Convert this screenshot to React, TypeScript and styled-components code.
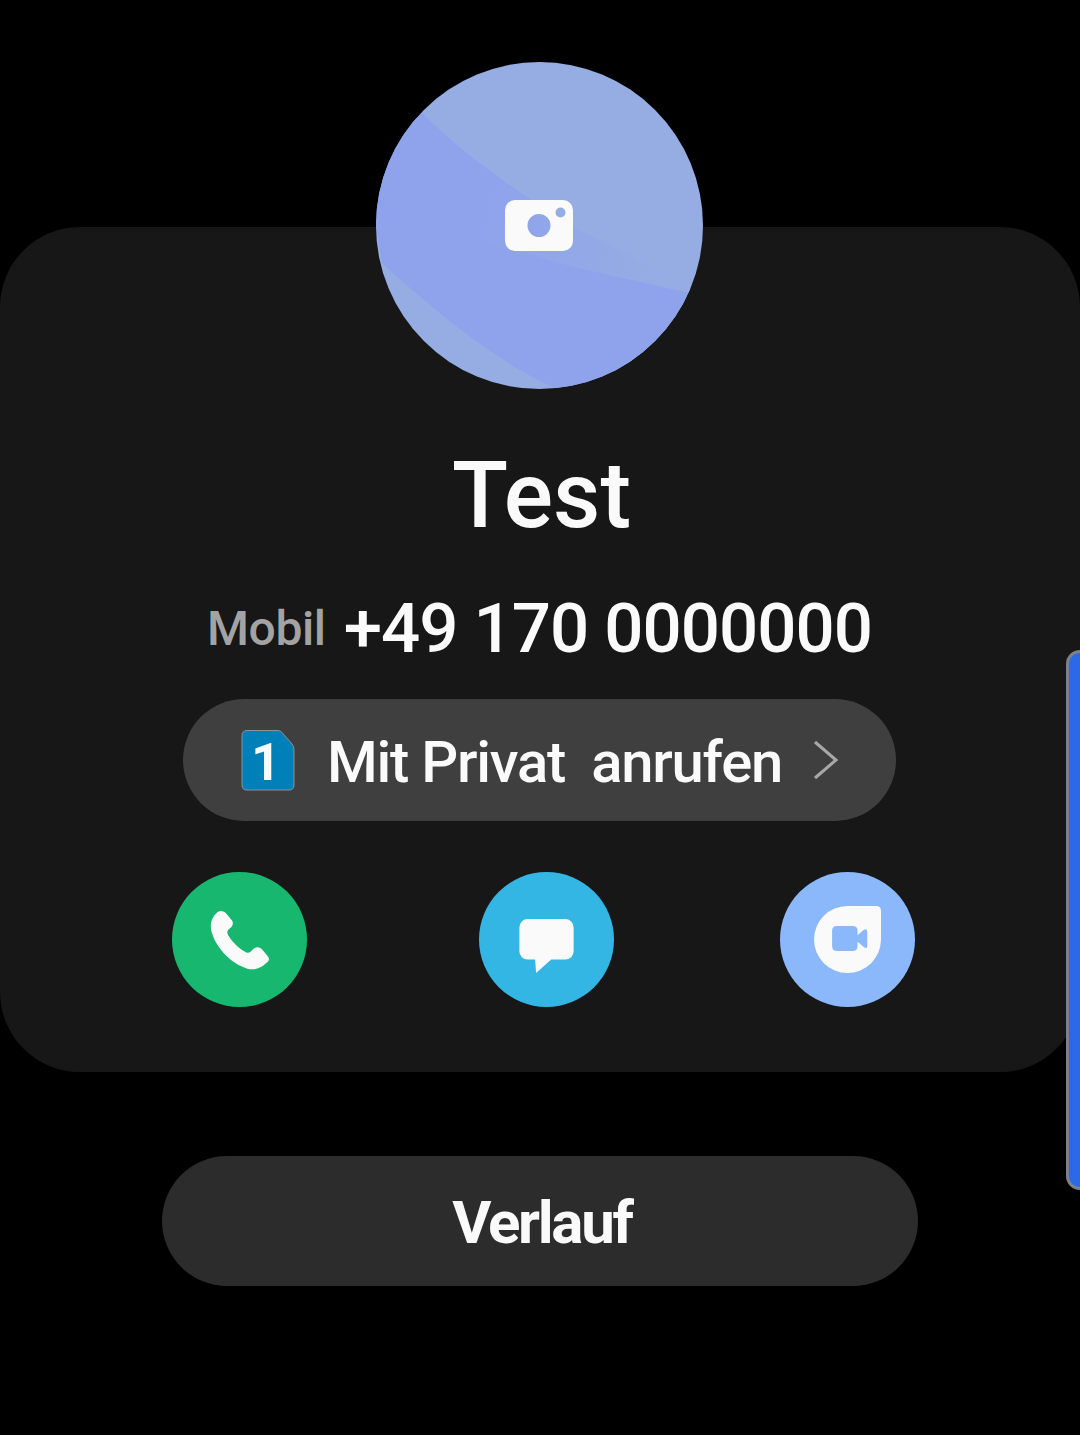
import React from 'react';
import styled, { createGlobalStyle } from 'styled-components';

const GlobalStyle = createGlobalStyle`
  html, body {
    margin: 0;
    padding: 0;
    background: #000;
  }
`;

const Screen = styled.div`
  position: relative;
  width: 1080px;
  height: 1435px;
  padding-top: 227px;
  box-sizing: border-box;
  overflow: hidden;
  background: #000;
  font-family: Roboto, "Liberation Sans", sans-serif;
  color: #fafafa;
`;

const Card = styled.section`
  display: flex;
  flex-direction: column;
  align-items: flex-start;
  height: 845px;
  box-sizing: border-box;
  border-radius: 80px;
  background: #171717;
`;

const Avatar = styled.div`
  position: relative;
  display: flex;
  align-items: center;
  justify-content: center;
  align-self: flex-start;
  width: 327px;
  height: 327px;
  margin: -165px 0 0 376px;
  border-radius: 50%;
  overflow: hidden;
  background: #95ade3;
`;

const AvatarArt = styled.svg`
  position: absolute;
  inset: 0;
`;

const CameraIcon = styled.svg`
  position: relative;
  display: block;
  margin-left: -1px;
`;

const Name = styled.h1`
  align-self: stretch;
  margin: 57px 0 0;
  padding-left: 3px;
  font-size: 92px;
  font-weight: 500;
  line-height: 100px;
  text-align: center;
`;

const NumberRow = styled.div`
  display: flex;
  align-items: center;
  gap: 18px;
  height: 80px;
  margin: 43px 0 0 207px;
  line-height: 82px;
`;

const Label = styled.span`
  font-size: 48px;
  font-weight: 500;
  letter-spacing: -0.4px;
  color: #a3a3a3;
`;

const PhoneNumber = styled.span`
  font-size: 69px;
  font-weight: 500;
  letter-spacing: -1px;
`;

const SimPill = styled.div`
  display: flex;
  align-items: center;
  width: 713px;
  height: 122px;
  margin: 30px 0 0 183px;
  padding-left: 58px;
  box-sizing: border-box;
  border-radius: 61px;
  background: #3f3f3f;
`;

const SimLabel = styled.span`
  margin: 3px 0 0 32px;
  font-size: 58px;
  font-weight: 500;
  letter-spacing: -1.25px;
  white-space: pre;
`;

const Chevron = styled.svg`
  margin-left: 31px;
  flex: none;
`;

const Actions = styled.div`
  display: grid;
  grid-template-columns: 307px 301px 135px;
  margin: 51px 0 0 172px;
`;

const ActionButton = styled.button<{ $color: string }>`
  display: flex;
  align-items: center;
  justify-content: center;
  width: 135px;
  height: 135px;
  padding: 0;
  border: 0;
  border-radius: 50%;
  background: ${(p) => p.$color};
`;

const HistoryButton = styled.button`
  display: block;
  width: 756px;
  height: 130px;
  margin: 84px 0 0 162px;
  padding: 2px 0 0 4px;
  border: 0;
  border-radius: 65px;
  background: #2c2c2c;
  font-family: inherit;
  font-size: 60px;
  font-weight: 700;
  letter-spacing: -2.3px;
  color: #fafafa;
`;

const ScrollThumb = styled.div`
  position: absolute;
  top: 650px;
  right: -14px;
  width: 28px;
  height: 540px;
  box-sizing: border-box;
  border: 3px solid #7d8288;
  border-radius: 14px;
  background: #2b69e8;
`;

function AvatarBackground() {
  return (
    <AvatarArt width="327" height="327" viewBox="0 0 327 327">
      <defs>
        <linearGradient id="fade" gradientUnits="userSpaceOnUse" x1="110" y1="140" x2="290" y2="215">
          <stop offset="0" stopColor="#95ade3" stopOpacity="0" />
          <stop offset="1" stopColor="#95ade3" stopOpacity="1" />
        </linearGradient>
      </defs>
      <path
        d="M46 51 C90 95 150 136 197 165 C235 185 275 205 327 234 L327 327 L181 327 C120 300 60 250 6 201 L-10 100 Z"
        fill="#8ea3ec"
      />
      <path d="M110 110 C150 136 197 165 197 165 C235 185 275 205 327 234 L197 205 L110 180 Z" fill="url(#fade)" />
    </AvatarArt>
  );
}

function Camera() {
  return (
    <CameraIcon width="68" height="51" viewBox="0 0 68 51">
      <path
        fillRule="evenodd"
        fill="#fafafa"
        d="M10 0 H58 A10 10 0 0 1 68 10 V41 A10 10 0 0 1 58 51 H10 A10 10 0 0 1 0 41 V10 A10 10 0 0 1 10 0 Z M34 14 A11.5 11.5 0 1 0 34 37 A11.5 11.5 0 1 0 34 14 Z M55.5 7.5 A5 5 0 1 0 55.5 17.5 A5 5 0 1 0 55.5 7.5 Z"
      />
    </CameraIcon>
  );
}

function SimIcon() {
  return (
    <svg width="54" height="61" viewBox="0 0 54 61">
      <path
        d="M6 .5 H37 Q39 .5 41 2.5 L51 14 Q53 16 53 19 V55 Q53 60 48 60 H6 Q1 60 1 55 V5.5 Q1 .5 6 .5 Z"
        fill="#0080b8"
        stroke="#8a9298"
      />
      <text x="25" y="50" fontFamily="Roboto, sans-serif" fontSize="51" fontWeight="700" fill="#fafafa" textAnchor="middle">
        1
      </text>
    </svg>
  );
}

function PhoneIcon() {
  return (
    <svg width="60" height="60" viewBox="150 148 180 180">
      <path
        fill="#fafafa"
        d="M172 155 C182 148 192 152 198 158 L215 178 C222 187 218 196 210 203 C200 211 200 216 206 226 C220 248 240 265 258 275 C268 280 273 272 280 265 C290 257 298 258 306 266 L322 285 C330 293 328 300 318 308 C303 322 285 330 262 324 C215 310 170 265 155 215 C148 190 155 170 172 155 Z"
      />
    </svg>
  );
}

function ChatIcon() {
  return (
    <svg width="67" height="67" viewBox="129 138 200 200">
      <path
        fill="#fafafa"
        d="M173 177 H285 A25 25 0 0 1 310 202 V273 A25 25 0 0 1 285 298 H243 L198 338 L195 298 H173 A25 25 0 0 1 148 273 V202 A25 25 0 0 1 173 177 Z"
      />
    </svg>
  );
}

function DuoIcon() {
  return (
    <svg width="67" height="67" viewBox="132 138 200 200">
      <path
        fill="#fafafa"
        d="M232 138 L318 138 Q332 138 332 152 L332 238 A100 100 0 1 1 232 138 Z"
      />
      <path
        fill="#8ab8fa"
        d="M200 198 H248 Q262 198 262 212 V225 L280 210 Q290 204 291 214 V258 Q290 268 280 260 L262 245 V258 Q262 272 248 272 H200 Q186 272 186 258 V212 Q186 198 200 198 Z"
      />
    </svg>
  );
}

export default function App() {
  return (
    <>
      <GlobalStyle />
      <Screen>
        <Card>
          <Avatar>
            <AvatarBackground />
            <Camera />
          </Avatar>
          <Name>Test</Name>
          <NumberRow>
            <Label>Mobil</Label>
            <PhoneNumber>+49 170 0000000</PhoneNumber>
          </NumberRow>
          <SimPill>
            <SimIcon />
            <SimLabel>Mit Privat  anrufen</SimLabel>
            <Chevron width="26" height="40" viewBox="0 0 26 40">
              <path d="M2 2 L23 20 L2 38" fill="none" stroke="#a8a8a8" strokeWidth="3" />
            </Chevron>
          </SimPill>
          <Actions>
            <ActionButton $color="#18b76f">
              <PhoneIcon />
            </ActionButton>
            <ActionButton $color="#34b6e4">
              <ChatIcon />
            </ActionButton>
            <ActionButton $color="#8ab8fa">
              <DuoIcon />
            </ActionButton>
          </Actions>
        </Card>
        <HistoryButton>Verlauf</HistoryButton>
        <ScrollThumb />
      </Screen>
    </>
  );
}
